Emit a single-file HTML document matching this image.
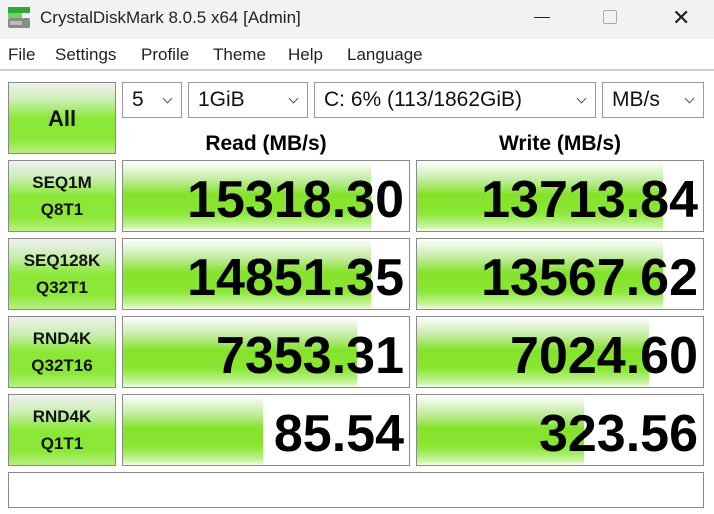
<!DOCTYPE html>
<html><head><style>
*{margin:0;padding:0;box-sizing:border-box}
body{width:714px;height:514px;background:#fff;font-family:"Liberation Sans",sans-serif;position:relative;overflow:hidden}
.a{position:absolute}
.title{left:0;top:0;width:714px;height:39px;background:#f2f2f5}
.box{position:absolute;border:1px solid #8a8a8a;background:#fff;overflow:hidden}
.lab{background:linear-gradient(#f0f0f0 0%,#c8eeb0 25%,#8ce838 50%,#8ce838 80%,#b8f080 100%);text-align:center;font-weight:bold;font-size:17px;color:#111;line-height:27px;padding-top:8px}
.fill{position:absolute;left:0;top:0;bottom:0;background:linear-gradient(#ffffff 0%,#c6eda8 25%,#84e22a 48%,#8ae836 75%,#c8f4a0 94%,#f4fdec 100%)}
.num{position:absolute;right:5px;top:9px;font-weight:bold;font-size:52px;color:#000;line-height:60px}
.cb{position:absolute;border:1px solid #999;height:36px;font-size:21px;line-height:34px;padding-left:9px;color:#111}
.cb:after{content:"";position:absolute;right:10px;top:12px;width:6px;height:6px;border-right:1px solid #555;border-bottom:1px solid #555;transform:rotate(45deg)}
.hd{position:absolute;top:132px;font-weight:bold;font-size:21px;text-align:center}
</style></head><body>
<div class="a title"></div>
<svg class="a" style="left:7px;top:6px" width="24" height="24" viewBox="0 0 24 24"><rect x="1" y="1" width="22" height="6" fill="#2fa83a"/><rect x="1" y="7" width="14" height="5" fill="#6cd65a"/><rect x="1" y="12" width="22" height="10" rx="2" fill="#8a8a8a"/><rect x="3" y="15" width="12" height="4" fill="#bbb"/><rect x="17" y="15" width="4" height="3" fill="#3c3"/></svg>
<div class="a" style="left:40px;top:8px;font-size:17px;color:#222">CrystalDiskMark 8.0.5 x64 [Admin]</div>
<div class="a" style="left:534px;top:17px;width:16px;height:1px;background:#222"></div>
<div class="a" style="left:603px;top:10px;width:14px;height:14px;border:1px solid #aaa;border-radius:2px"></div>
<div class="a" style="left:672px;top:5px;font-size:22px;color:#222">✕</div>
<div class="a" style="top:45px;left:0;font-size:17px;color:#222;white-space:nowrap">
<span class="a" style="left:8px">File</span><span class="a" style="left:55px">Settings</span><span class="a" style="left:141px">Profile</span><span class="a" style="left:213px">Theme</span><span class="a" style="left:288px">Help</span><span class="a" style="left:347px">Language</span></div>
<div class="a" style="left:0;top:69px;width:714px;height:2px;background:#d0d0d0"></div>
<div class="box lab" style="left:8px;top:82px;width:108px;height:72px;font-size:22px;line-height:72px;padding-top:0">All</div>
<div class="cb" style="left:122px;top:82px;width:60px">5</div>
<div class="cb" style="left:188px;top:82px;width:120px">1GiB</div>
<div class="cb" style="left:314px;top:82px;width:282px">C: 6% (113/1862GiB)</div>
<div class="cb" style="left:602px;top:82px;width:102px">MB/s</div>
<div class="hd" style="left:122px;width:288px">Read (MB/s)</div>
<div class="hd" style="left:416px;width:288px">Write (MB/s)</div>

<div class="box lab" style="left:8px;top:160px;width:108px;height:72px">SEQ1M<br>Q8T1</div>
<div class="box" style="left:122px;top:160px;width:288px;height:72px"><div class="fill" style="width:248px"></div><div class="num">15318.30</div></div>
<div class="box" style="left:416px;top:160px;width:288px;height:72px"><div class="fill" style="width:246px"></div><div class="num">13713.84</div></div>

<div class="box lab" style="left:8px;top:238px;width:108px;height:72px">SEQ128K<br>Q32T1</div>
<div class="box" style="left:122px;top:238px;width:288px;height:72px"><div class="fill" style="width:248px"></div><div class="num">14851.35</div></div>
<div class="box" style="left:416px;top:238px;width:288px;height:72px"><div class="fill" style="width:246px"></div><div class="num">13567.62</div></div>

<div class="box lab" style="left:8px;top:316px;width:108px;height:72px">RND4K<br>Q32T16</div>
<div class="box" style="left:122px;top:316px;width:288px;height:72px"><div class="fill" style="width:234px"></div><div class="num">7353.31</div></div>
<div class="box" style="left:416px;top:316px;width:288px;height:72px"><div class="fill" style="width:232px"></div><div class="num">7024.60</div></div>

<div class="box lab" style="left:8px;top:394px;width:108px;height:72px">RND4K<br>Q1T1</div>
<div class="box" style="left:122px;top:394px;width:288px;height:72px"><div class="fill" style="width:140px"></div><div class="num">85.54</div></div>
<div class="box" style="left:416px;top:394px;width:288px;height:72px"><div class="fill" style="width:167px"></div><div class="num">323.56</div></div>

<div class="box" style="left:8px;top:472px;width:696px;height:36px"></div>
</body></html>
